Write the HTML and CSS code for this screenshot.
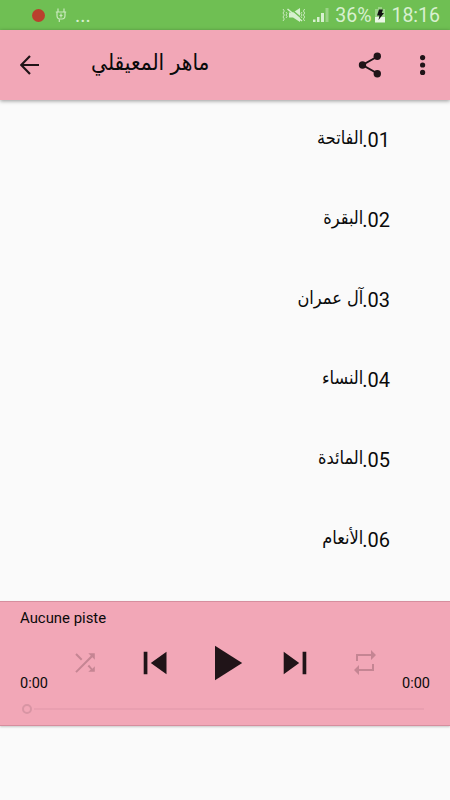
FILE: index.html
```
<!DOCTYPE html>
<html lang="ar">
<head>
    <meta charset="UTF-8">
    <meta name="viewport" content="width=device-width, initial-scale=1.0">
    <title>ماهر المعيقلي</title>
    <link rel="stylesheet" href="styles.css">
</head>
<body>
    <div class="status-bar">
        <span class="record-dot"></span>
        <svg class="plug-icon" width="12" height="15" viewBox="0 0 12 15">
            <path d="M3 .5V4M9 .5V4M.8 4h10.4M2 4v3.5Q2 11 5 11h2q3 0 3-3.5V4M4.3 11v3M6 5.5v4M4.5 7.5h3" />
        </svg>
        <span class="dots">...</span>
        <svg class="mute-icon" width="24" height="18" viewBox="0 0 24 18">
            <path class="fill" d="M7 6.5h4l7-4.5v14l-7-4.5H7z" />
            <path class="gap" d="M7 1.5l13 11" />
            <path class="line" d="M5.5 3L20 15" />
            <path class="wave" d="M1 3l1.3 2L1 7l1.3 2L1 11l1.3 2L1 15M4 6l1 1.5L4 9l1 1.5L4 12M22.7 3l-1.3 2 1.3 2-1.3 2 1.3 2-1.3 2 1.3 2M20 6l-1 1.5L20 9l-1 1.5 1 1.5" />
        </svg>
        <svg class="signal-icon" width="16" height="15" viewBox="0 0 16 15">
            <path d="M0 11.5h2.5V14H0zM4 9h2.5v5H4zM8 5h3v9H8z" />
            <path class="weak" d="M12.5 0h3v14h-3z" />
        </svg>
        <span class="percent">36%</span>
        <svg class="battery-icon" width="10" height="16" viewBox="0 0 10 16">
            <path class="weak" d="M3 0h4v2h3v9H0V2h3z" />
            <path class="level" d="M0 10h10v5.5H0z" />
            <path class="bolt" d="M4 2.5h4L6.8 6H9l-5.5 7L4.5 8.5H2z" />
        </svg>
        <span class="clock">18:16</span>
    </div>

    <div class="toolbar">
        <svg class="back-icon" width="20" height="20" viewBox="0 0 20 20">
            <path d="M19 10H1.5M10 1L1.2 10l8.8 9" />
        </svg>
        <h1>ماهر المعيقلي</h1>
        <svg class="share-icon" width="24" height="26" viewBox="0 0 24 26">
            <path d="M19.5 4.5L4.5 13l15 8.5" />
            <circle cx="19.3" cy="4.3" r="3.7" />
            <circle cx="4.5" cy="13" r="3.7" />
            <circle cx="19.3" cy="21.7" r="3.7" />
        </svg>
        <svg class="more-icon" width="6" height="20" viewBox="0 0 6 20">
            <circle cx="2.6" cy="2.6" r="2.6" />
            <circle cx="2.6" cy="10" r="2.6" />
            <circle cx="2.6" cy="17.4" r="2.6" />
        </svg>
    </div>

    <ul class="track-list" dir="rtl">
        <li><span class="number">01.</span><span class="name">الفاتحة</span></li>
        <li><span class="number">02.</span><span class="name">البقرة</span></li>
        <li><span class="number">03.</span><span class="name">آل عمران</span></li>
        <li><span class="number">04.</span><span class="name">النساء</span></li>
        <li><span class="number">05.</span><span class="name">المائدة</span></li>
        <li><span class="number">06.</span><span class="name">الأنعام</span></li>
    </ul>

    <div class="player">
        <div class="track-title">Aucune piste</div>
        <div class="player-row">
            <span class="time">0:00</span>
            <div class="controls">
                <svg class="disabled" width="20" height="20" viewBox="0 0 20 20">
                    <path d="M7.1 5.7L1.4 0 0 1.4l5.7 5.7zM13 0l2.5 2.5L0 18.1l1.4 1.4L17.1 4l2.4 2.5V0zM13.8 11.4l-1.5 1.5 3.2 3.2-2.5 2.4h6.5V13l-2.4 2.5z" transform="translate(.3 .3)" />
                </svg>
                <svg width="24" height="24" viewBox="0 0 24 24">
                    <path d="M.7.8h3.7v22.4H.7zM23.5.8v22.4L7.8 12z" />
                </svg>
                <svg width="36" height="36" viewBox="0 0 36 36">
                    <path d="M8 .8v34.4L35.2 18z" />
                </svg>
                <svg width="24" height="24" viewBox="0 0 24 24">
                    <path d="M.7.8v22.4L16.2 12zM19.6.8h3.7v22.4h-3.7z" />
                </svg>
                <svg class="disabled" width="22" height="25" viewBox="0 0 22 25">
                    <path d="M2 4h15V0l5 5-5 5V6H4v5H2zM20 21H5v4l-5-5 5-5v4h13v-5h2z" />
                </svg>
            </div>
            <span class="time">0:00</span>
        </div>
        <div class="seek-bar">
            <span class="thumb"></span>
            <span class="line"></span>
        </div>
    </div>
</body>
</html>
```
FILE: styles.css
```
* {
    box-sizing: border-box;
}
body {
    margin: 0;
    height: 800px;
    overflow: hidden;
    background-color: #fafafa;
    color: #0a0a0a;
    font-family: Roboto, "DejaVu Sans", sans-serif;
}
svg {
    display: block;
    flex: none;
}
.status-bar {
    display: flex;
    align-items: center;
    height: 30px;
    padding: 0 10px 0 32px;
    background-color: #6fbf53;
    color: #d8f0d0;
    font-size: 20px;
    line-height: 30px;
}
.record-dot {
    width: 13px;
    height: 13px;
    border-radius: 50%;
    background-color: #b9402d;
}
.plug-icon {
    margin-left: 10px;
    fill: none;
    stroke: #c9e9bd;
    stroke-width: 1.2;
}
.dots {
    margin-left: 8px;
}
.mute-icon {
    margin-left: auto;
    fill: none;
}
.mute-icon .fill {
    fill: #d8f0d0;
}
.mute-icon .gap {
    stroke: #6fbf53;
    stroke-width: 1.5;
}
.mute-icon .line {
    stroke: #d8f0d0;
    stroke-width: 1.5;
}
.mute-icon .wave {
    stroke: #c9e9bd;
    stroke-width: 1;
}
.signal-icon {
    margin-left: 7px;
    fill: #d8f0d0;
}
.signal-icon .weak,
.battery-icon .weak {
    fill: #9bd387;
}
.percent {
    margin: 2px 4px 0 6px;
    font-size: 19.5px;
}
.battery-icon .level {
    fill: #eaf7e5;
}
.battery-icon .bolt {
    fill: #111;
}
.clock {
    margin: 2px 0 0 6px;
    font-size: 19.5px;
}
.toolbar {
    display: flex;
    align-items: center;
    height: 70px;
    padding: 0 24px 0 20px;
    background-color: #f2a7b7;
    box-shadow: 0 1px 4px rgba(0, 0, 0, 0.4);
}
.toolbar h1 {
    margin: 0 auto 6px 51px;
    font-family: "DejaVu Sans Condensed", "DejaVu Sans", sans-serif;
    font-size: 22.5px;
    font-stretch: condensed;
    font-weight: 400;
    line-height: 30px;
}
.back-icon {
    fill: none;
    stroke: #201418;
    stroke-width: 2.2;
}
.share-icon {
    fill: #201418;
}
.share-icon path {
    fill: none;
    stroke: #201418;
    stroke-width: 2;
}
.more-icon {
    margin-left: 38px;
    fill: #201418;
}
.track-list {
    margin: 0;
    padding: 0 60px;
    list-style: none;
}
.track-list li {
    display: flex;
    height: 80px;
    font-size: 20px;
    line-height: 80px;
}
.name {
    margin-top: -2px;
    margin-right: -1px;
    font-family: "DejaVu Sans Condensed", "DejaVu Sans", sans-serif;
    font-size: 18px;
    font-stretch: condensed;
}
.player {
    height: 125px;
    margin-top: 21px;
    padding: 6px 20px 0;
    background-color: #f2a7b7;
    border-top: 1px solid #d68e9e;
    border-bottom: 1px solid #d68e9e;
    box-shadow: 0 1px 2px rgba(0, 0, 0, 0.2);
}
.track-title {
    font-size: 14.9px;
    line-height: 20px;
}
.player-row {
    display: flex;
    align-items: flex-end;
    justify-content: space-between;
    height: 64px;
}
.time {
    font-size: 14.5px;
    line-height: 16px;
}
.controls {
    display: grid;
    grid-template-columns: repeat(5, 70px);
    place-items: center;
    height: 36px;
    margin-bottom: 11.5px;
    fill: #201418;
}
.controls .disabled {
    fill: #c58593;
}
.seek-bar {
    display: flex;
    align-items: center;
    gap: 2px;
    height: 20px;
    padding: 0 6px 0 2px;
    margin-top: 7px;
}
.thumb {
    width: 10px;
    height: 10px;
    border: 2px solid #d895a4;
    border-radius: 50%;
}
.seek-bar .line {
    flex: 1;
    height: 2px;
    background-color: #e99fb0;
}
```
